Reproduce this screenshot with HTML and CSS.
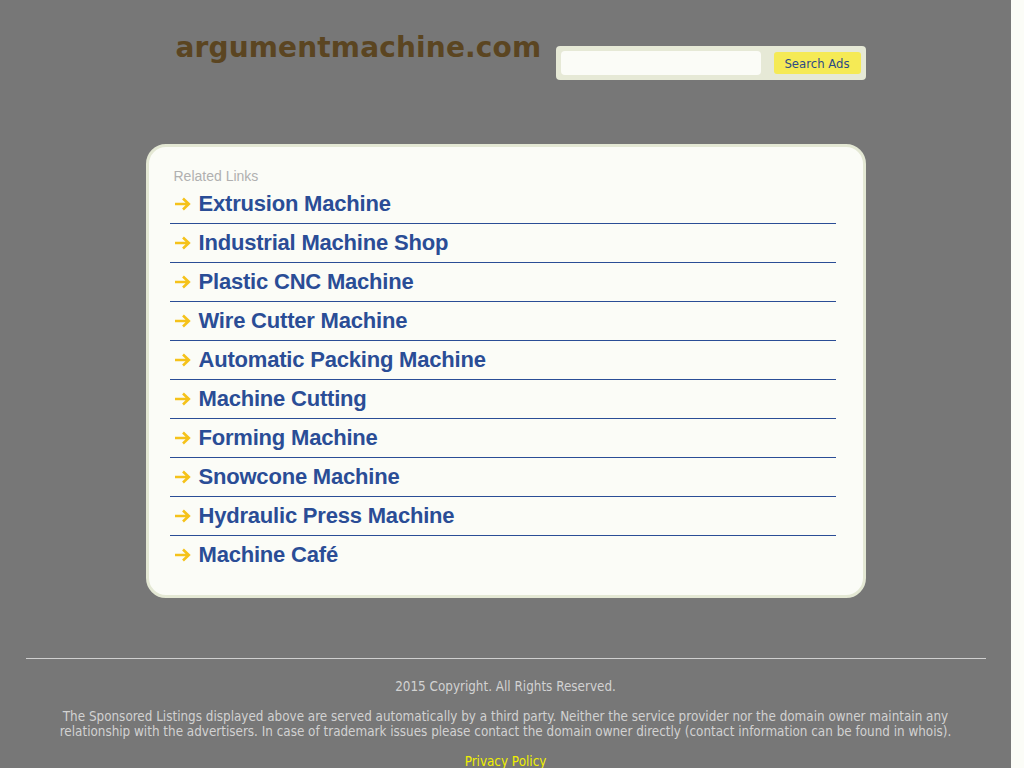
FILE: index.html
```html
<!DOCTYPE html>
<html>
<head>
<meta charset="utf-8">
<title>argumentmachine.com</title>
<link rel="stylesheet" href="styles.css">
</head>
<body>
<div class="page">
  <div class="header">
    <div class="domain">argumentmachine.com</div>
    <form class="search">
      <input class="search-input" type="text">
      <button class="search-btn" type="button">Search Ads</button>
    </form>
  </div>
  <div class="box">
    <div class="related">Related Links</div>
    <ul class="links">
      <li><svg class="arrow" viewBox="0 0 17 14"><path d="M1 7H14.5M9 1.5L14.8 7L9 12.5"/></svg><a href="#">Extrusion Machine</a></li>
      <li><svg class="arrow" viewBox="0 0 17 14"><path d="M1 7H14.5M9 1.5L14.8 7L9 12.5"/></svg><a href="#">Industrial Machine Shop</a></li>
      <li><svg class="arrow" viewBox="0 0 17 14"><path d="M1 7H14.5M9 1.5L14.8 7L9 12.5"/></svg><a href="#">Plastic CNC Machine</a></li>
      <li><svg class="arrow" viewBox="0 0 17 14"><path d="M1 7H14.5M9 1.5L14.8 7L9 12.5"/></svg><a href="#">Wire Cutter Machine</a></li>
      <li><svg class="arrow" viewBox="0 0 17 14"><path d="M1 7H14.5M9 1.5L14.8 7L9 12.5"/></svg><a href="#">Automatic Packing Machine</a></li>
      <li><svg class="arrow" viewBox="0 0 17 14"><path d="M1 7H14.5M9 1.5L14.8 7L9 12.5"/></svg><a href="#">Machine Cutting</a></li>
      <li><svg class="arrow" viewBox="0 0 17 14"><path d="M1 7H14.5M9 1.5L14.8 7L9 12.5"/></svg><a href="#">Forming Machine</a></li>
      <li><svg class="arrow" viewBox="0 0 17 14"><path d="M1 7H14.5M9 1.5L14.8 7L9 12.5"/></svg><a href="#">Snowcone Machine</a></li>
      <li><svg class="arrow" viewBox="0 0 17 14"><path d="M1 7H14.5M9 1.5L14.8 7L9 12.5"/></svg><a href="#">Hydraulic Press Machine</a></li>
      <li class="last"><svg class="arrow" viewBox="0 0 17 14"><path d="M1 7H14.5M9 1.5L14.8 7L9 12.5"/></svg><a href="#">Machine Café</a></li>
    </ul>
  </div>
  <div class="footer">
    <div class="rule"></div>
    <p class="copy">2015 Copyright. All Rights Reserved.</p>
    <p class="disclaimer">The Sponsored Listings displayed above are served automatically by a third party. Neither the service provider nor the domain owner maintain any relationship with the advertisers. In case of trademark issues please contact the domain owner directly (contact information can be found in whois).</p>
    <p class="privacy"><a href="#">Privacy Policy</a></p>
  </div>
</div>
</body>
</html>
```

FILE: styles.css
```css
html, body {
  margin: 0;
  padding: 0;
  background: #fbfcf7;
}
.page {
  width: 1011px;
  min-height: 768px;
  background: #777777;
  overflow: hidden;
}
.header {
  width: 720px;
  margin: 0 auto;
  display: flex;
  justify-content: space-between;
  align-items: flex-start;
  padding-top: 30px;
  height: 116px;
  box-sizing: border-box;
}
.domain {
  font-family: "DejaVu Sans", sans-serif;
  font-weight: bold;
  font-size: 28px;
  letter-spacing: 0.15px;
  color: #5b4521;
  margin-left: 30px;
  line-height: 36px;
}
.search {
  margin: 16px 0 0 0;
  width: 310px;
  height: 34px;
  box-sizing: border-box;
  background: #e6e9d6;
  border-radius: 4px;
  display: flex;
  align-items: center;
  padding: 0 5px;
  justify-content: space-between;
}
.search-input {
  width: 200px;
  height: 24px;
  box-sizing: border-box;
  border: none;
  border-radius: 4px;
  background: #fbfcf7;
  padding: 0;
}
.search-btn {
  width: 87px;
  height: 22px;
  border: none;
  border-radius: 3px;
  background: #f5ea55;
  color: #2d4a86;
  font-family: "DejaVu Sans Condensed", "DejaVu Sans", sans-serif;
  font-size: 13px;
  padding: 0;
}
.box {
  width: 720px;
  margin: 28px auto 0;
  box-sizing: border-box;
  height: 454px;
  background: #fbfcf7;
  border: 3px solid #e4e8d4;
  border-radius: 20px;
  padding: 20px 27px 0 21px;
}
.related {
  font-family: "Liberation Sans", Arial, sans-serif;
  font-size: 14px;
  color: #b0b0b0;
  margin-left: 4px;
  line-height: 18px;
}
.links {
  list-style: none;
  margin: 0;
  padding: 0;
}
.links li {
  height: 38px;
  border-bottom: 1px solid #2a4d96;
  display: flex;
  align-items: center;
}
.links li.last {
  border-bottom: none;
}
.arrow {
  width: 17px;
  height: 14px;
  margin: 0 8px 0 4px;
  fill: none;
  stroke: #f5c21a;
  stroke-width: 2.6;
}
.links a {
  font-family: "Liberation Sans", Arial, sans-serif;
  font-weight: bold;
  font-size: 22px;
  letter-spacing: -0.2px;
  color: #2a4d96;
  text-decoration: none;
}
.footer {
  padding-top: 60px;
  text-align: center;
  font-family: "DejaVu Sans Condensed", "DejaVu Sans", sans-serif;
  font-size: 13.35px;
  color: #d2d2d2;
}
.rule {
  margin: 0 25px 0 26px;
  height: 1px;
  background: #d0d0d0;
}
.copy {
  margin: 20px 0 0;
  line-height: 15px;
}
.disclaimer {
  margin: 15px 55px 0;
  line-height: 15px;
}
.privacy {
  margin: 15px 0 0;
  line-height: 15px;
}
.privacy a {
  color: #f0f000;
  text-decoration: none;
}
```
